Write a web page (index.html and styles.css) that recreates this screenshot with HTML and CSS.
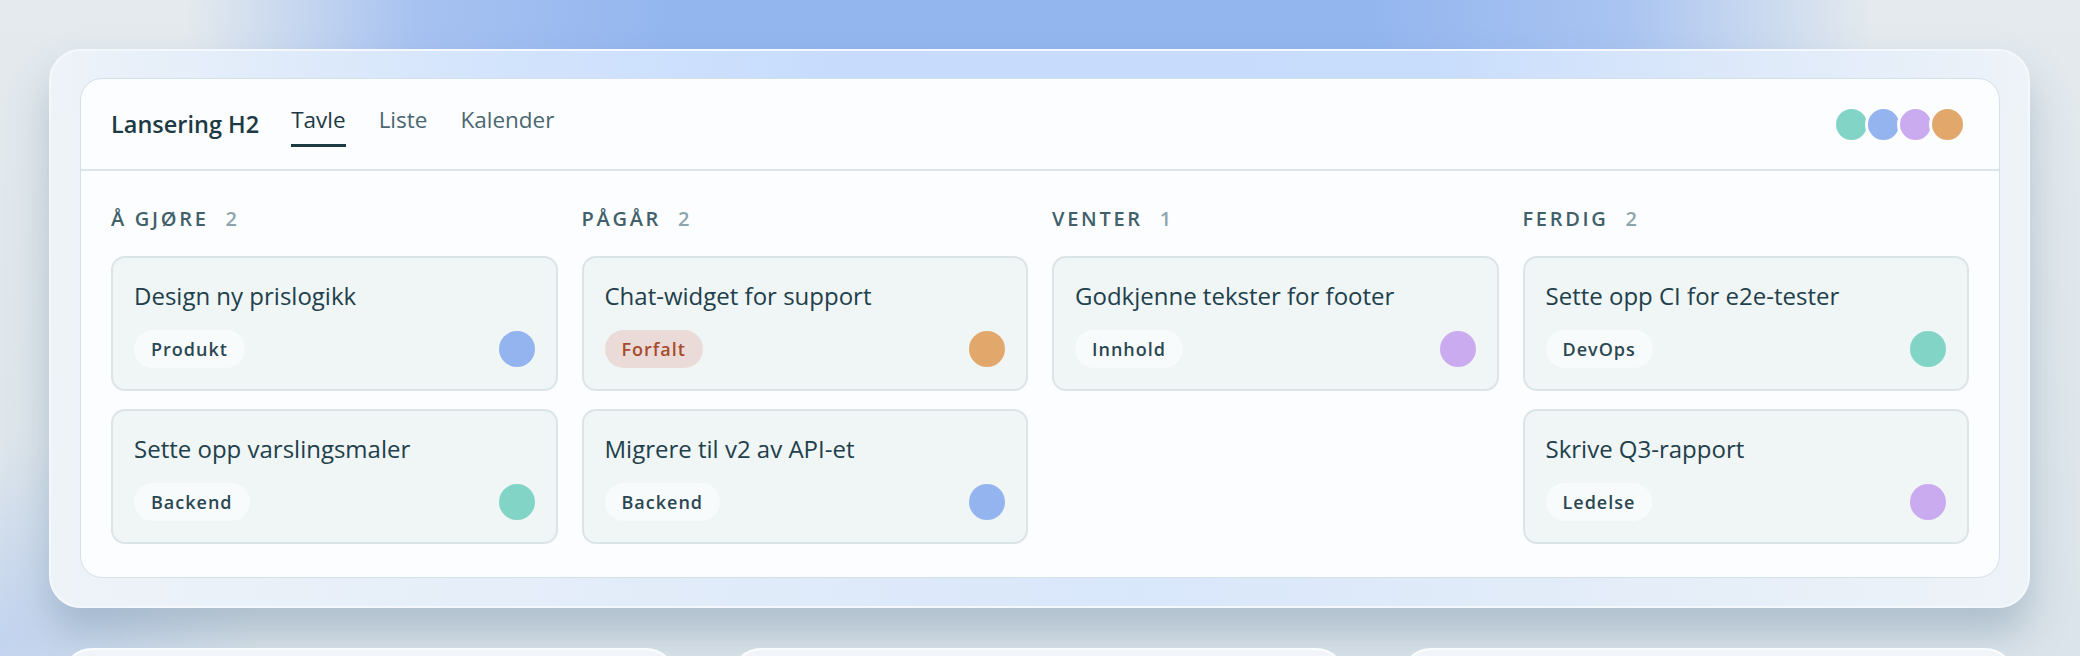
FILE: index.html
```html
<!DOCTYPE html>
<html lang="no">
<head>
  <meta charset="UTF-8" />
  <title>Lansering H2 – Tavle</title>
  <link rel="stylesheet" href="styles.css">
</head>
<body>
  <div class="page">
    <section class="glass">
      <div class="board-card">
        <header class="board-header">
          <h1 class="project-name">Lansering H2</h1>
          <nav class="tabs">
            <a class="tab active">Tavle</a>
            <a class="tab">Liste</a>
            <a class="tab">Kalender</a>
          </nav>
          <div class="members">
            <span class="avatar teal"></span>
            <span class="avatar blue"></span>
            <span class="avatar purple"></span>
            <span class="avatar orange"></span>
          </div>
        </header>

        <div class="board">
          <div class="column">
            <h2 class="column-title">Å gjøre <span class="count">2</span></h2>
            <div class="task">
              <div class="task-title">Design ny prislogikk</div>
              <div class="task-footer">
                <span class="tag">Produkt</span>
                <span class="avatar small blue"></span>
              </div>
            </div>
            <div class="task">
              <div class="task-title">Sette opp varslingsmaler</div>
              <div class="task-footer">
                <span class="tag">Backend</span>
                <span class="avatar small teal"></span>
              </div>
            </div>
          </div>

          <div class="column">
            <h2 class="column-title">Pågår <span class="count">2</span></h2>
            <div class="task">
              <div class="task-title">Chat-widget for support</div>
              <div class="task-footer">
                <span class="tag overdue">Forfalt</span>
                <span class="avatar small orange"></span>
              </div>
            </div>
            <div class="task">
              <div class="task-title">Migrere til v2 av API-et</div>
              <div class="task-footer">
                <span class="tag">Backend</span>
                <span class="avatar small blue"></span>
              </div>
            </div>
          </div>

          <div class="column">
            <h2 class="column-title">Venter <span class="count">1</span></h2>
            <div class="task">
              <div class="task-title">Godkjenne tekster for footer</div>
              <div class="task-footer">
                <span class="tag">Innhold</span>
                <span class="avatar small purple"></span>
              </div>
            </div>
          </div>

          <div class="column">
            <h2 class="column-title">Ferdig <span class="count">2</span></h2>
            <div class="task">
              <div class="task-title">Sette opp CI for e2e-tester</div>
              <div class="task-footer">
                <span class="tag">DevOps</span>
                <span class="avatar small teal"></span>
              </div>
            </div>
            <div class="task">
              <div class="task-title">Skrive Q3-rapport</div>
              <div class="task-footer">
                <span class="tag">Ledelse</span>
                <span class="avatar small purple"></span>
              </div>
            </div>
          </div>
        </div>
      </div>
    </section>

    <div class="more-panels">
      <div class="peek"></div>
      <div class="peek"></div>
      <div class="peek"></div>
    </div>
  </div>
</body>
</html>
```

FILE: styles.css
```css
body {
  margin: 0;
  height: 656px;
  overflow: hidden;
  font-family: 'Open Sans', 'Noto Sans', sans-serif;
  color: #1f3b46;
  background:
    linear-gradient(90deg, rgba(148, 182, 239, 0) 9%, #a7c2f1 20%, #94b6ef 32%, #94b6ef 66%, #a9c4f1 78%, rgba(148, 182, 239, 0) 90%) top / 100% 62px no-repeat,
    radial-gradient(ellipse 260px 200px at 0 640px, #c3d4ef, rgba(195, 212, 239, 0)),
    linear-gradient(180deg, #e4eaee, #dbe4ea);
}
.page {
  padding: 49px 50px 0 49px;
}
.glass {
  padding: 27px 28px 28px 29px;
  border: 2px solid #f4f8fc;
  border-radius: 32px;
  background:
    linear-gradient(90deg, #eef3f8 0%, #d3e4fc 22%, #c7dcfd 40%, #c8ddfc 70%, #dde9fa 85%, #eef3f8 100%) top / 100% 60px no-repeat,
    linear-gradient(90deg, #eef3f8 0%, #e2ecf9 30%, #d9e7fb 55%, #e4edf8 80%, #eef3f8 100%);
  box-shadow: 0 26px 40px rgba(90, 120, 150, 0.35);
}
.board-card {
  background-color: #fbfdfe;
  border: 1px solid #d3e0e8;
  border-radius: 22px;
}
.board-header {
  display: flex;
  align-items: center;
  height: 90px;
  padding: 0 33px 0 30px;
  border-bottom: 2px solid #dbe6ea;
}
.project-name {
  margin: 0 32px 0 0;
  font-size: 23.5px;
  font-weight: 600;
  color: #1d3a44;
}
.tabs {
  display: flex;
  gap: 33px;
}
.tab {
  padding: 4px 0 9px;
  font-size: 22.5px;
  line-height: 30px;
  color: #4b6771;
  border-bottom: 3px solid transparent;
}
.tab.active {
  color: #1d3a44;
  border-bottom-color: #1d3a44;
}
.members {
  display: flex;
  margin-left: auto;
}
.avatar {
  display: block;
  width: 37px;
  height: 37px;
  border-radius: 50%;
  box-sizing: border-box;
}
.members .avatar {
  border: 3px solid #fbfdfe;
}
.members .avatar + .avatar {
  margin-left: -5px;
}
.members .avatar:first-child {
  border-color: transparent;
  background-clip: padding-box;
}
.avatar.small {
  width: 36px;
  height: 36px;
}
.teal { background-color: #82d5c6; }
.blue { background-color: #93b4ef; }
.purple { background-color: #cbabef; }
.orange { background-color: #e2a86b; }

.board {
  display: grid;
  grid-template-columns: repeat(4, 1fr);
  gap: 24px;
  padding: 33px 30px 33px;
}
.column {
  display: flex;
  flex-direction: column;
  gap: 18px;
}
.column-title {
  margin: 0 0 4px 0;
  font-size: 20px;
  line-height: 30px;
  font-weight: 600;
  letter-spacing: 2.7px;
  text-transform: uppercase;
  color: #41606a;
}
.count {
  margin-left: 9px;
  font-weight: 600;
  color: #8ea5ac;
}
.task {
  padding: 21px;
  background-color: #f0f5f5;
  border: 2px solid #dbe5e8;
  border-radius: 14px;
}
.task-title {
  font-size: 24px;
  line-height: 33px;
  color: #21404b;
}
.task-footer {
  display: flex;
  justify-content: space-between;
  align-items: center;
  margin-top: 18px;
}
.tag {
  padding: 7px 17px;
  font-size: 18px;
  line-height: 24px;
  font-weight: 600;
  letter-spacing: 1px;
  color: #2a4752;
  background-color: #f8fbfb;
  border-radius: 20px;
}
.tag.overdue {
  color: #a64b2c;
  background-color: #ebdbd8;
}
.more-panels {
  display: grid;
  grid-template-columns: repeat(3, 1fr);
  gap: 55px;
  margin-top: 40px;
  padding: 0 15px 0 13px;
}
.peek {
  height: 60px;
  background-color: #f1f5f9;
  border: 2px solid #fafcfe;
  border-radius: 30px 30px 0 0;
}
```
